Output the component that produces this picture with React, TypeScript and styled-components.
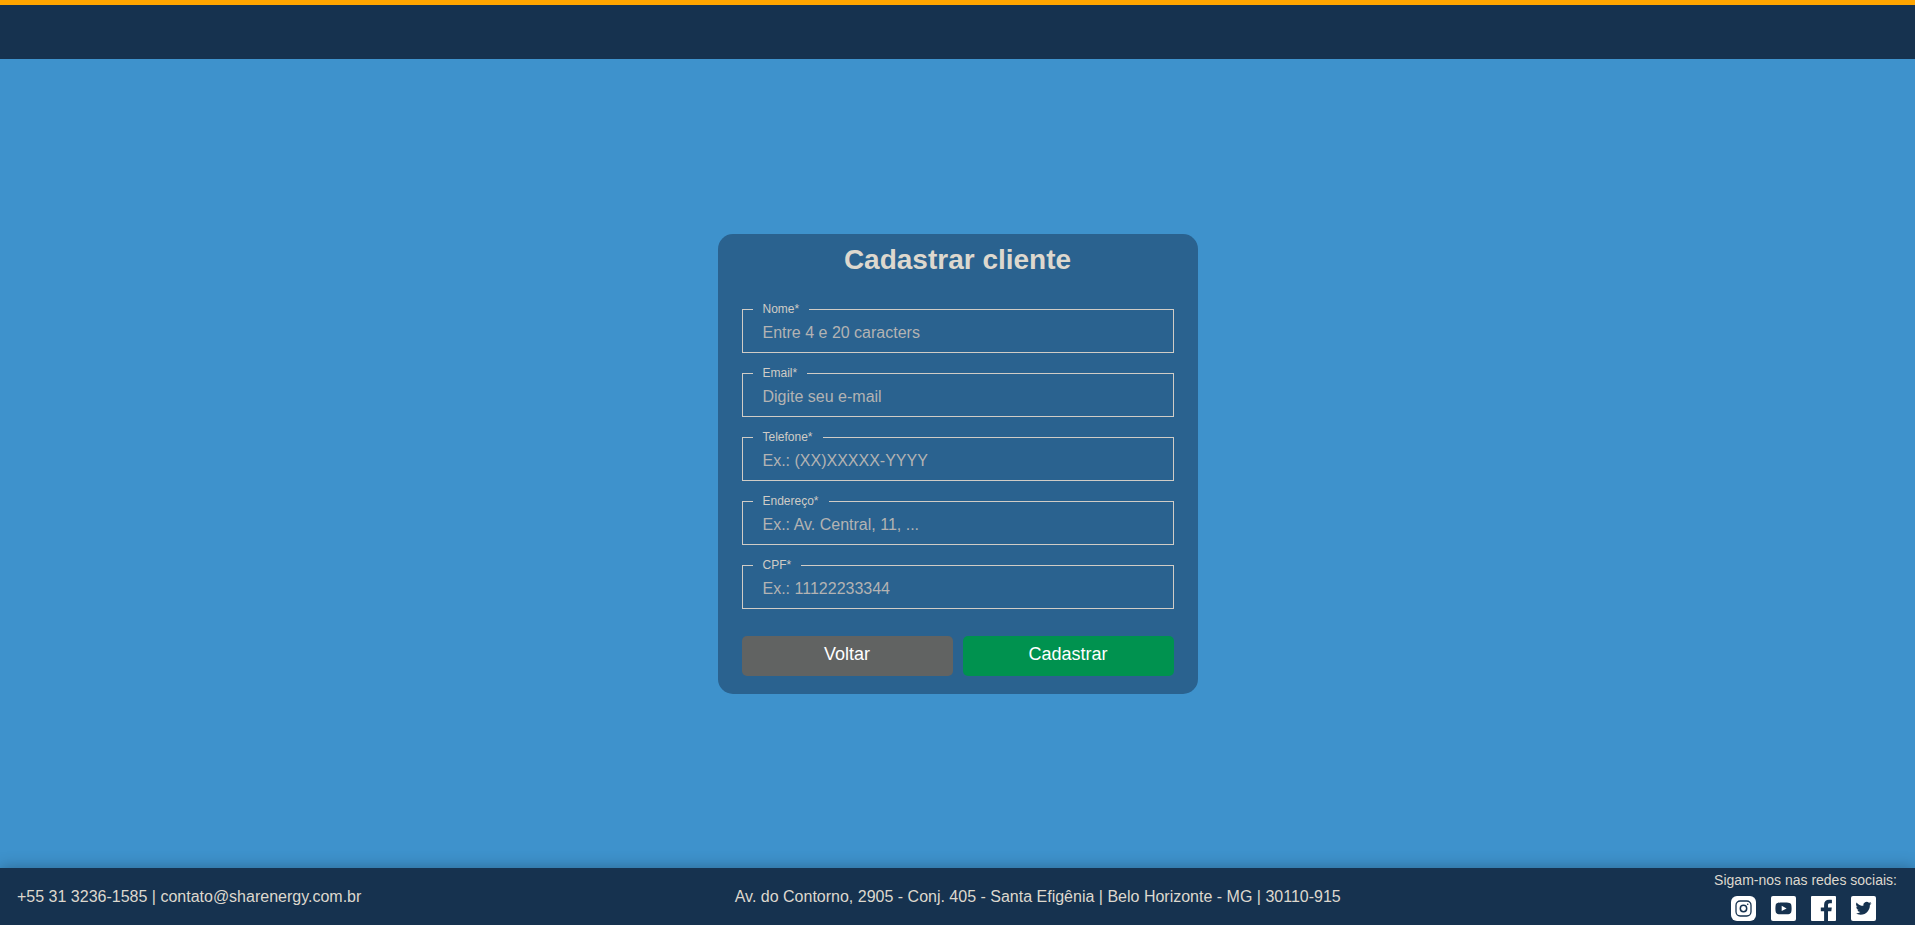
import React from "react";
import styled, { createGlobalStyle } from "styled-components";

const colors = {
  navy: "#16324f",
  sky: "#3e92cc",
  card: "#2a628f",
  sand: "#ddd8ce",
  line: "#d0ccc6",
  hint: "#b3b3b3",
  orange: "#ffa500",
  gray: "#616362",
  green: "#00924f",
};

const GlobalStyle = createGlobalStyle`
  * { box-sizing: border-box; }
  body {
    margin: 0;
    font-family: "Liberation Sans", Arial, sans-serif;
    font-size: 16px;
    color: ${colors.sand};
  }
`;

const Page = styled.div`
  display: flex;
  flex-direction: column;
  min-height: 100vh;
  background: ${colors.sky};
`;

const Header = styled.header`
  height: 59px;
  border-top: 5px solid ${colors.orange};
  background: ${colors.navy};
`;

const Main = styled.main`
  flex: 1;
  display: flex;
  align-items: center;
  justify-content: center;
`;

const Card = styled.form`
  display: flex;
  flex-direction: column;
  gap: 27px;
  width: 100%;
  max-width: 480px;
  padding: 10px 24px 18px;
  border-radius: 15px;
  background: ${colors.card};
`;

const Title = styled.h1`
  margin: 0;
  font-size: 28px;
  line-height: 32px;
  text-align: center;
`;

const Fields = styled.div`
  display: flex;
  flex-direction: column;
  gap: 14px;
`;

const FieldBox = styled.fieldset`
  height: 50px;
  min-width: 0;
  margin: 0;
  padding: 0 10px;
  border: 1px solid ${colors.line};
`;

const Legend = styled.legend`
  padding: 0 10px;
  font-size: 12px;
  line-height: 13px;
  color: ${colors.line};
`;

const Input = styled.input`
  display: block;
  width: 100%;
  height: 34px;
  padding: 0 10px;
  border: 0;
  outline: 0;
  background: transparent;
  font: inherit;
  color: ${colors.sand};

  &::placeholder {
    color: ${colors.hint};
    opacity: 1;
  }
`;

const Actions = styled.div`
  display: flex;
  gap: 10px;
`;

const Button = styled.button<{ $color: string }>`
  flex: 1;
  height: 40px;
  padding: 0 0 2px;
  border: 0;
  border-radius: 5px;
  background: ${(p) => p.$color};
  color: #fff;
  font-family: inherit;
  font-size: 18px;
  cursor: pointer;
`;

const Footer = styled.footer`
  display: flex;
  align-items: center;
  justify-content: space-between;
  padding: 4px 18px 4px 17px;
  background: ${colors.navy};
  box-shadow: 0 0 15px rgba(0, 0, 0, 0.3);
`;

const FooterText = styled.p`
  margin: 0;
  line-height: 18px;
`;

const Social = styled.div`
  display: flex;
  flex-direction: column;
  align-items: center;
  gap: 8px;
  font-size: 14px;
  line-height: 16px;
`;

const SocialLinks = styled.nav`
  display: flex;
  gap: 15px;
  padding-right: 4px;
`;

const SocialLink = styled.a`
  display: block;
  width: 25px;
  height: 25px;
`;

const Icon = styled.svg.attrs({ viewBox: "0 0 25 25", "aria-hidden": true })`
  display: block;
  width: 100%;
  height: 100%;
`;

const fields = [
  { id: "nome", label: "Nome*", hint: "Entre 4 e 20 caracters", type: "text" },
  { id: "email", label: "Email*", hint: "Digite seu e-mail", type: "email" },
  { id: "telefone", label: "Telefone*", hint: "Ex.: (XX)XXXXX-YYYY", type: "tel" },
  { id: "endereco", label: "Endereço*", hint: "Ex.: Av. Central, 11, ...", type: "text" },
  { id: "cpf", label: "CPF*", hint: "Ex.: 11122233344", type: "text" },
];

const socials = [
  {
    name: "Instagram",
    radius: 6,
    mark: (
      <g fill="none" stroke={colors.navy}>
        <rect x="5" y="5" width="15" height="15" rx="4.2" strokeWidth="1.3" />
        <circle cx="12.5" cy="12.5" r="3.2" strokeWidth="1.5" />
        <circle cx="16.7" cy="8.3" r="0.8" fill={colors.navy} stroke="none" />
      </g>
    ),
  },
  {
    name: "YouTube",
    radius: 2,
    mark: (
      <>
        <path
          fill={colors.navy}
          d="M12.5 6.5c2.3 0 4.500.1 5.900.4 1.200.3 1.700 1 1.900 2.100.2 1.100.3 2.200.3 3.400s-.1 2.300-.3 3.400c-.2 1.100-.7 1.800-1.900 2.100-1.400.3-3.600.4-5.900.4s-4.500-.1-5.900-.4c-1.200-.3-1.700-1-1.900-2.100-.2-1.100-.3-2.200-.3-3.400s.1-2.300.3-3.400c.2-1.100.7-1.800 1.900-2.100 1.400-.3 3.600-.4 5.900-.4z"
        />
        <path fill="#fff" d="M10.700 9.700v5.400l4.900-2.700z" />
      </>
    ),
  },
  {
    name: "Facebook",
    radius: 1,
    mark: (
      <path
        fill={colors.navy}
        d="M17 25v-9.700h3.300l.5-3.800H17V9.100c0-1.100.3-1.900 1.900-1.900h2V3.900c-.3 0-1.500-.1-2.900-.1-2.900 0-4.900 1.800-4.900 5v2.700H9.800v3.800h3.300V25z"
      />
    ),
  },
  {
    name: "Twitter",
    radius: 2,
    mark: (
      <path
        fill={colors.navy}
        transform="translate(4.500 3.800)"
        d="M5.026 15c6.038 0 9.341-5.003 9.341-9.334 0-.14 0-.282-.006-.422A6.685 6.685 0 0 0 16 3.542a6.658 6.658 0 0 1-1.889.518 3.301 3.301 0 0 0 1.447-1.817 6.533 6.533 0 0 1-2.087.793A3.286 3.286 0 0 0 7.875 6.03a9.325 9.325 0 0 1-6.767-3.429 3.289 3.289 0 0 0 1.018 4.382A3.323 3.323 0 0 1 .64 6.575v.045a3.288 3.288 0 0 0 2.632 3.218 3.203 3.203 0 0 1-.865.115 3.23 3.23 0 0 1-.614-.057 3.283 3.283 0 0 0 3.067 2.277A6.588 6.588 0 0 1 .78 13.58a6.32 6.32 0 0 1-.78-.045A9.344 9.344 0 0 0 5.026 15z"
      />
    ),
  },
];

export default function App() {
  return (
    <Page>
      <GlobalStyle />
      <Header />
      <Main>
        <Card noValidate onSubmit={(e) => e.preventDefault()}>
          <Title>Cadastrar cliente</Title>
          <Fields>
            {fields.map((f) => (
              <FieldBox key={f.id}>
                <Legend>
                  <label htmlFor={f.id}>{f.label}</label>
                </Legend>
                <Input id={f.id} name={f.id} type={f.type} placeholder={f.hint} />
              </FieldBox>
            ))}
          </Fields>
          <Actions>
            <Button type="button" $color={colors.gray}>Voltar</Button>
            <Button type="submit" $color={colors.green}>Cadastrar</Button>
          </Actions>
        </Card>
      </Main>
      <Footer>
        <FooterText>+55 31 3236-1585 | contato@sharenergy.com.br</FooterText>
        <FooterText>
          Av. do Contorno, 2905 - Conj. 405 - Santa Efigênia | Belo Horizonte - MG | 30110-915
        </FooterText>
        <Social>
          <span>Sigam-nos nas redes sociais:</span>
          <SocialLinks>
            {socials.map((s) => (
              <SocialLink key={s.name} href="#" aria-label={s.name}>
                <Icon>
                  <rect width="25" height="25" rx={s.radius} fill="#fff" />
                  {s.mark}
                </Icon>
              </SocialLink>
            ))}
          </SocialLinks>
        </Social>
      </Footer>
    </Page>
  );
}
